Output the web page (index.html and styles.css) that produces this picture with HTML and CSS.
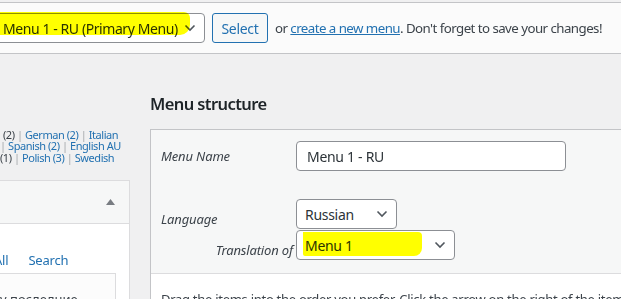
FILE: index.html
```html
<!DOCTYPE html>
<html lang="en">
<head>
  <meta charset="UTF-8">
  <meta name="viewport" content="width=device-width, initial-scale=1.0">
  <title>Menus</title>
  <link rel="stylesheet" href="styles.css">
</head>
<body>
  <div class="manage-menus">
    <div class="select select-menu">
      <span>Menu 1 - RU (Primary Menu)</span>
      <svg class="chevron" width="12" height="8" viewBox="0 0 12 8"><path d="M1.5 1.5 L6 6 L10.5 1.5" fill="none" stroke="#50575e" stroke-width="1.6"/></svg>
      <span class="marker marker-top"></span>
    </div>
    <button type="button" class="button">Select</button>
    <span class="manage-text">or <a href="#">create a new menu</a>. Don't forget to save your changes!</span>
  </div>

  <div class="columns">
    <div class="settings">
      <p class="languages">
        <span class="lang-line first">(2) <i>|</i> <a href="#">German (2)</a> <i>|</i> <a href="#">Italian</a></span>
        <span class="lang-line"><i>|</i> <a href="#">Spanish (2)</a> <i>|</i> <a href="#">English AU</a></span>
        <span class="lang-line">(1) <i>|</i> <a href="#">Polish (3)</a> <i>|</i> <a href="#">Swedish</a></span>
      </p>
      <div class="box">
        <div class="box-head">
          <svg class="toggle" width="9" height="6" viewBox="0 0 9 6"><path d="M4.5 0 L9 6 L0 6 Z" fill="#787c82"/></svg>
        </div>
        <div class="box-body">
          <div class="tabs">
            <a href="#" class="tab-all">All</a>
            <a href="#">Search</a>
          </div>
          <div class="tab-panel">у последние</div>
        </div>
      </div>
    </div>

    <div class="management">
      <h2>Menu structure</h2>
      <div class="menu-edit">
        <div class="menu-header">
          <div class="field-row">
            <label class="field-label">Menu Name</label>
            <div class="text-input">Menu 1 - RU</div>
          </div>
          <div class="field-row">
            <label class="field-label low">Language</label>
            <div class="select select-lang">
              <span>Russian</span>
              <svg class="chevron" width="12" height="8" viewBox="0 0 12 8"><path d="M1.5 1.5 L6 6 L10.5 1.5" fill="none" stroke="#50575e" stroke-width="1.6"/></svg>
            </div>
          </div>
          <div class="field-row">
            <label class="field-label low right">Translation of</label>
            <div class="select select-trans">
              <span>Menu 1</span>
              <svg class="chevron" width="12" height="8" viewBox="0 0 12 8"><path d="M1.5 1.5 L6 6 L10.5 1.5" fill="none" stroke="#50575e" stroke-width="1.6"/></svg>
              <span class="marker marker-trans"></span>
            </div>
          </div>
        </div>
        <div class="menu-body">
          <p>Drag the items into the order you prefer. Click the arrow on the right of the item to reveal additional configuration options.</p>
        </div>
      </div>
    </div>
  </div>
</body>
</html>
```

FILE: styles.css
```css
body {
  margin: 0;
  padding-top: 2px;
  background: #f0f0f1;
  color: #3c434a;
  font-family: "Noto Sans", "Open Sans", sans-serif;
  font-size: 13px;
  overflow: hidden;
}
a {
  color: #2271b1;
}
.manage-menus {
  display: flex;
  align-items: center;
  height: 50px;
  border-top: 1px solid #c3c4c7;
  border-bottom: 1px solid #c3c4c7;
  background: #fbfbfb;
  font-size: 14px;
  white-space: nowrap;
}
.select {
  position: relative;
  display: flex;
  flex-shrink: 0;
  align-items: center;
  justify-content: space-between;
  box-sizing: border-box;
  height: 30px;
  padding: 0 8px;
  border: 1px solid #8c8f94;
  border-radius: 4px;
  background: #fff;
  color: #2c3338;
  font-size: 14px;
  letter-spacing: -0.3px;
}
.select-menu {
  width: 211px;
  margin-left: -6px;
  letter-spacing: -0.42px;
}
.button {
  flex-shrink: 0;
  width: 56px;
  height: 30px;
  margin-left: 7px;
  padding: 0;
  border: 1px solid #2271b1;
  border-radius: 3px;
  background: #f6f7f7;
  color: #2271b1;
  font-family: inherit;
  font-size: 14px;
  letter-spacing: -0.3px;
}
.manage-text {
  margin-left: 7px;
  font-size: 13.3px;
  letter-spacing: -0.55px;
  color: #3c434a;
}
.marker {
  position: absolute;
  background: #ffff00;
  mix-blend-mode: multiply;
}
.marker-top {
  left: 5px;
  top: -2px;
  width: 190px;
  height: 23px;
  border-radius: 0 6px 10px 0;
}
.marker-trans {
  left: 6px;
  top: 1px;
  width: 119px;
  height: 24px;
  border-radius: 0 4px 8px 2px;
}

.columns {
  display: flex;
  align-items: flex-start;
}
.settings {
  flex: 0 0 130px;
  overflow: hidden;
}
.languages {
  margin: 75px 0 17px;
  font-size: 11px;
  line-height: 11.3px;
  letter-spacing: -0.45px;
}
.languages i {
  font-style: normal;
  color: #a7aaad;
}
.languages a {
  text-decoration: none;
}
.lang-line {
  display: block;
  white-space: nowrap;
}
.lang-line.first {
  padding-left: 3px;
}
.box {
  margin-left: -1px;
  border: 1px solid #dcdcde;
  background: #fff;
}
.box-head {
  display: flex;
  align-items: center;
  justify-content: flex-end;
  height: 42px;
  padding-right: 14px;
  border-bottom: 1px solid #dcdcde;
  background: #f6f7f7;
}
.box-body {
  padding-top: 27px;
}
.tabs {
  display: flex;
  gap: 20px;
  height: 22px;
  font-size: 13px;
  letter-spacing: -0.2px;
}
.tabs a {
  text-decoration: none;
}
.tab-all {
  margin-left: -6px;
}
.tab-panel {
  margin-right: 13px;
  padding: 16px 0 6px;
  border: 1px solid #dcdcde;
  border-left: 0;
  background: #fcfcfc;
  white-space: nowrap;
}

.management {
  flex: 0 0 600px;
  margin-left: 20px;
  padding-top: 39px;
}
.management h2 {
  margin: 0 0 14px;
  color: #1d2327;
  font-size: 16.5px;
  font-weight: 600;
  line-height: 22px;
  letter-spacing: -0.6px;
}
.menu-edit {
  border: 1px solid #c3c4c7;
  border-right: 0;
  background: #fff;
}
.menu-header {
  padding: 11px 0 13px 10px;
  border-bottom: 1px solid #dcdcde;
  background: #f6f7f7;
}
.field-row {
  display: flex;
  align-items: center;
  margin-bottom: 28px;
}
.field-row:nth-child(2) {
  margin-bottom: 1px;
}
.field-row:last-child {
  margin-bottom: 0;
}
.field-label {
  flex: 0 0 132px;
  margin-right: 3px;
  color: #3c434a;
  font-style: italic;
  letter-spacing: -0.15px;
}
.field-label.low {
  padding-top: 9px;
}
.field-label.right {
  text-align: right;
}
.text-input {
  display: flex;
  align-items: center;
  box-sizing: border-box;
  width: 270px;
  height: 30px;
  padding: 0 10px;
  border: 1px solid #8c8f94;
  border-radius: 4px;
  background: #fff;
  color: #2c3338;
  font-size: 14px;
  letter-spacing: -0.3px;
}
.select-lang {
  width: 101px;
}
.select-trans {
  width: 159px;
}
.menu-body {
  padding: 0 10px;
}
.menu-body p {
  margin: 16px 0;
  white-space: nowrap;
  letter-spacing: -0.28px;
}
```
